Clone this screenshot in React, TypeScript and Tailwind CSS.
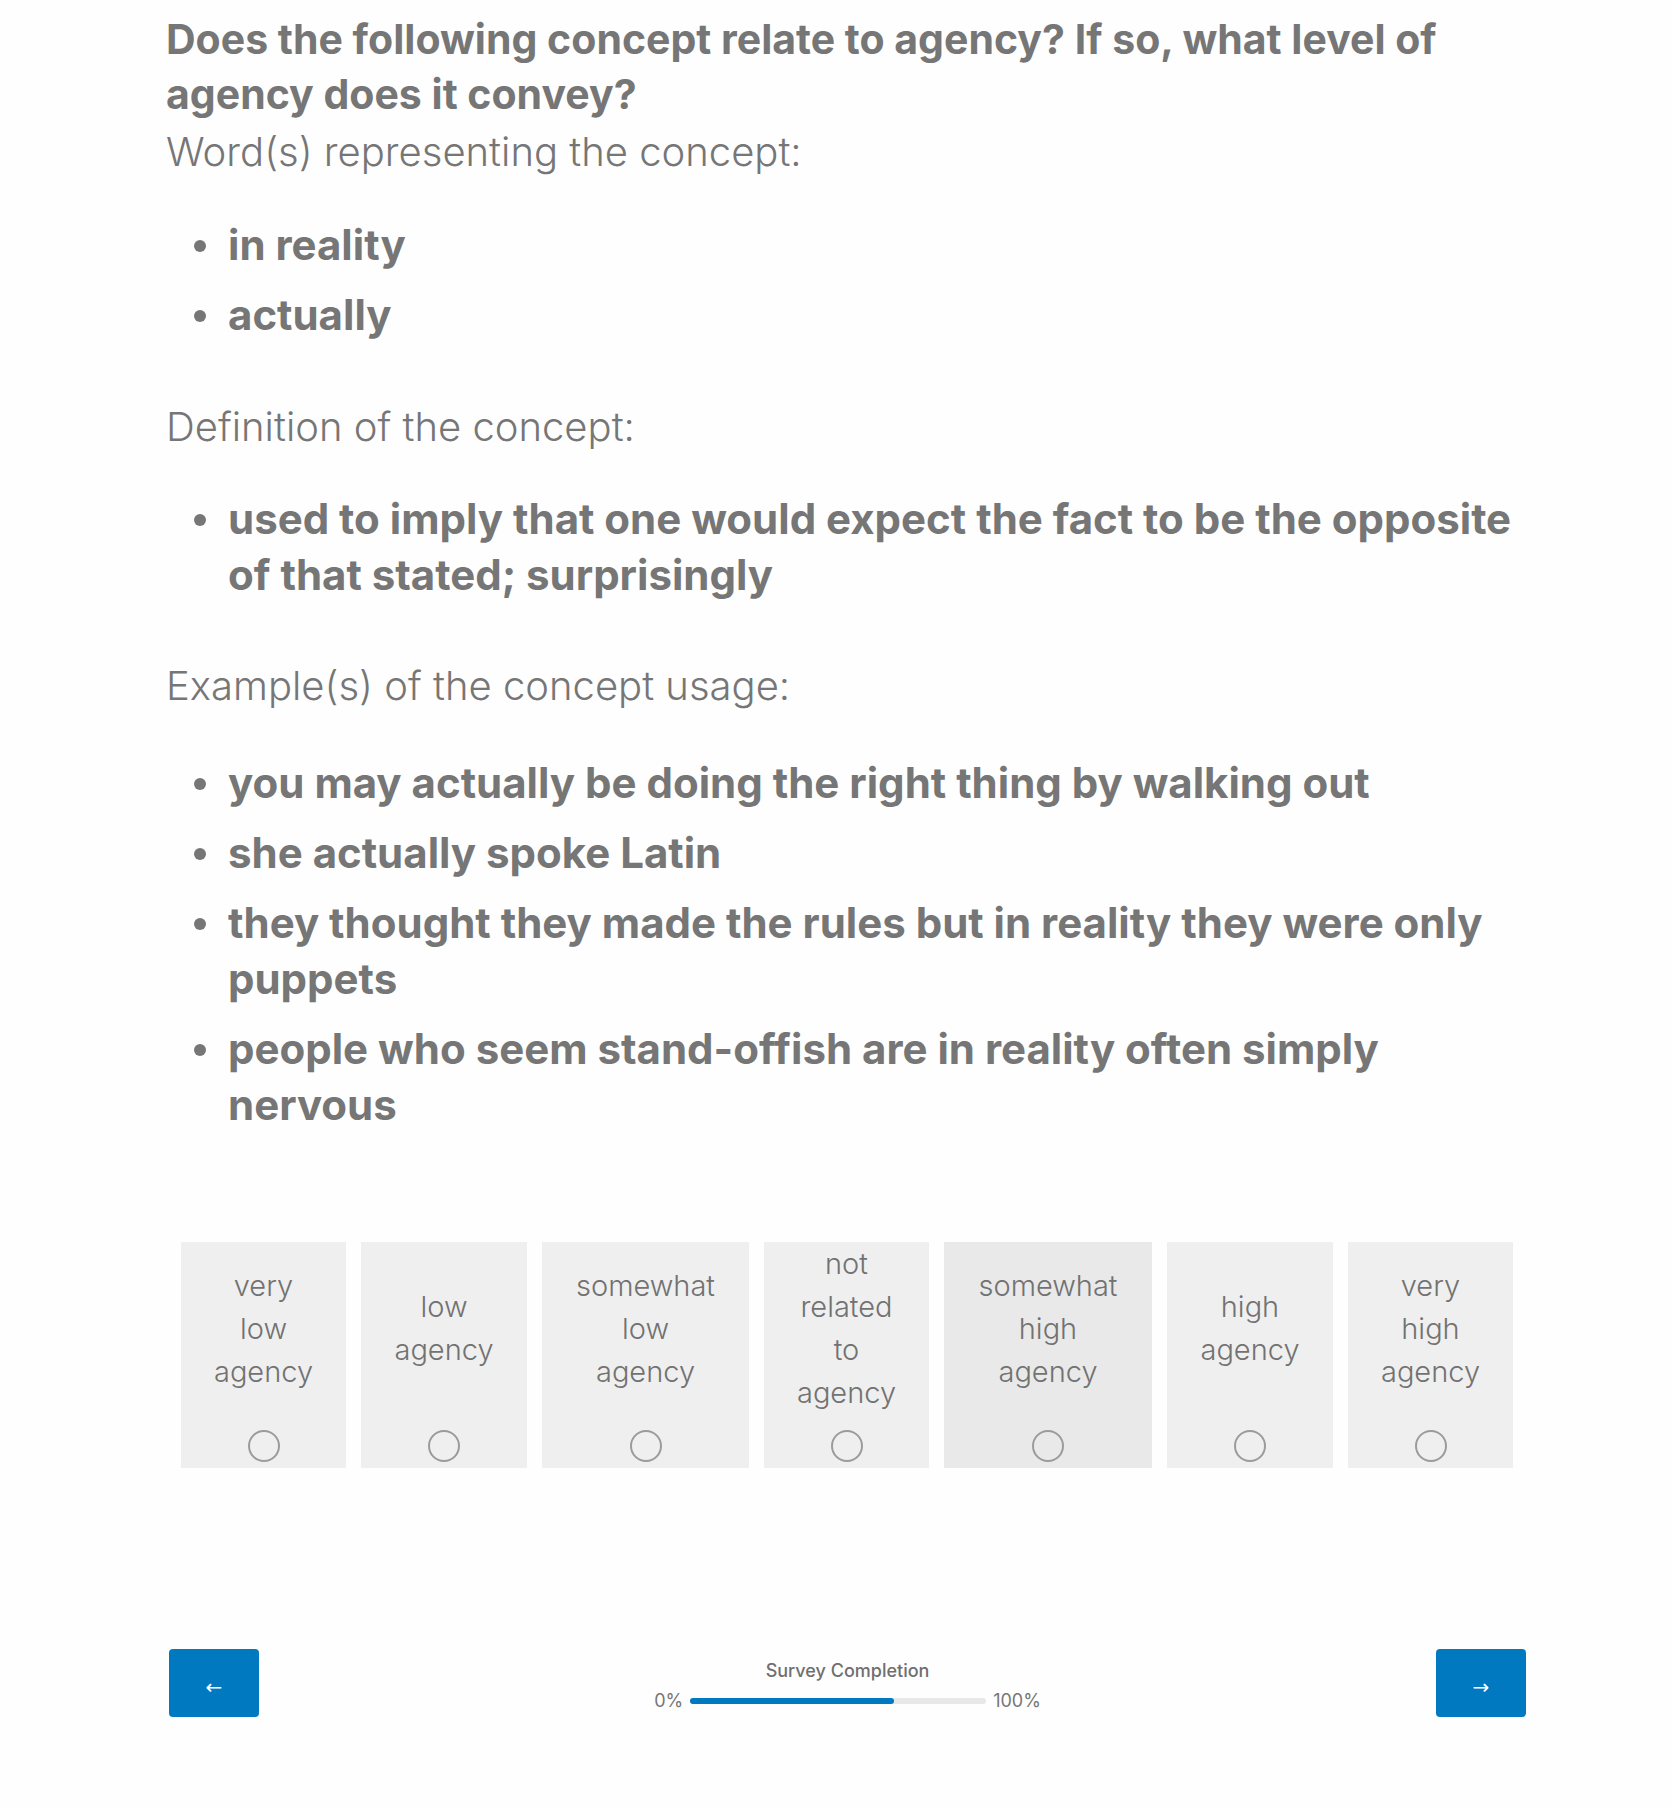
const words = ['in reality', 'actually']
const definitions = ['used to imply that one would expect the fact to be the opposite of that stated; surprisingly']
const examples = [
  'you may actually be doing the right thing by walking out',
  'she actually spoke Latin',
  'they thought they made the rules but in reality they were only puppets',
  'people who seem stand-offish are in reality often simply nervous',
]

const choices = [
  { label: ['very', 'low', 'agency'], w: 'w-[165px]' },
  { label: ['low', 'agency'], w: 'w-[166px]' },
  { label: ['somewhat', 'low', 'agency'], w: 'w-[207px]' },
  { label: ['not', 'related', 'to', 'agency'], w: 'w-[165px]' },
  { label: ['somewhat', 'high', 'agency'], w: 'w-[208px]', hover: true },
  { label: ['high', 'agency'], w: 'w-[166px]' },
  { label: ['very', 'high', 'agency'], w: 'w-[165px]' },
]

function Label({ children, className = '' }: { children: React.ReactNode; className?: string }) {
  return <p className={`text-[40px] font-light leading-[58px] ${className}`}>{children}</p>
}

function Bullets({ items, className = '' }: { items: string[]; className?: string }) {
  return (
    <ul className={`ml-[62px] flex flex-col gap-[14px] ${className}`}>
      {items.map((t) => (
        <li key={t} className="relative text-[42px] font-bold leading-[56px]">
          <span className="absolute left-[-34px] top-[23px] h-[12px] w-[12px] rounded-full bg-[#767676]" />
          {t}
        </li>
      ))}
    </ul>
  )
}

function NavButton({ children }: { children: React.ReactNode }) {
  return (
    <button
      className="flex h-[68px] w-[90px] items-center justify-center rounded-[4px] bg-[#0079c1] pt-[8px] text-[20px] text-white"
      style={{ fontFamily: '"DejaVu Sans", sans-serif' }}
    >
      {children}
    </button>
  )
}

export default function App() {
  return (
    <div className="min-h-[1808px] w-full bg-[#fefefe] text-[#767676]" style={{ fontFamily: 'Inter, "Noto Sans", sans-serif' }}>
      <div className="ml-[166px] w-[1360px] pt-[12px]">
        <h1 className="text-[41px] font-bold leading-[55px]">
          Does the following concept relate to agency? If so, what level of agency does it convey?
        </h1>
        <Label className="mt-[1px]">Word(s) representing the concept:</Label>
        <Bullets items={words} className="mt-[36px]" />
        <Label className="mt-[55px]">Definition of the concept:</Label>
        <Bullets items={definitions} className="mt-[35px]" />
        <Label className="mt-[54px]">Example(s) of the concept usage:</Label>
        <Bullets items={examples} className="mt-[40px]" />

        <div className="ml-[15px] mt-[109px] flex gap-[15px]">
          {choices.map((c, i) => (
            <label
              key={i}
              className={`flex h-[226px] flex-col items-center ${c.w} ${c.hover ? 'bg-[#e9e9e9]' : 'bg-[#efefef]'}`}
            >
              <div className="flex h-[172px] flex-col items-center justify-center text-center text-[29px] font-light leading-[43px] text-[#727272]">
                {c.label.map((l) => (
                  <span key={l}>{l}</span>
                ))}
              </div>
              <span className="mt-[16px] h-[32px] w-[32px] rounded-full border-2 border-[#9b9b9b]" />
            </label>
          ))}
        </div>
      </div>

      <div className="ml-[169px] mt-[181px] flex w-[1357px] items-start justify-between">
        <NavButton>←</NavButton>
        <div className="flex flex-col items-center pt-[11px]">
          <span className="text-[18px] font-medium leading-[22px] text-[#6f6f6f]">Survey Completion</span>
          <div className="mt-[7px] flex items-center gap-[7px] text-[18px] leading-[24px]">
            <span>0%</span>
            <div className="h-[6px] w-[296px] rounded-full bg-[#e8e8e8]">
              <div className="h-full w-[69%] rounded-full bg-[#0079c1]" />
            </div>
            <span>100%</span>
          </div>
        </div>
        <NavButton>→</NavButton>
      </div>
    </div>
  )
}
